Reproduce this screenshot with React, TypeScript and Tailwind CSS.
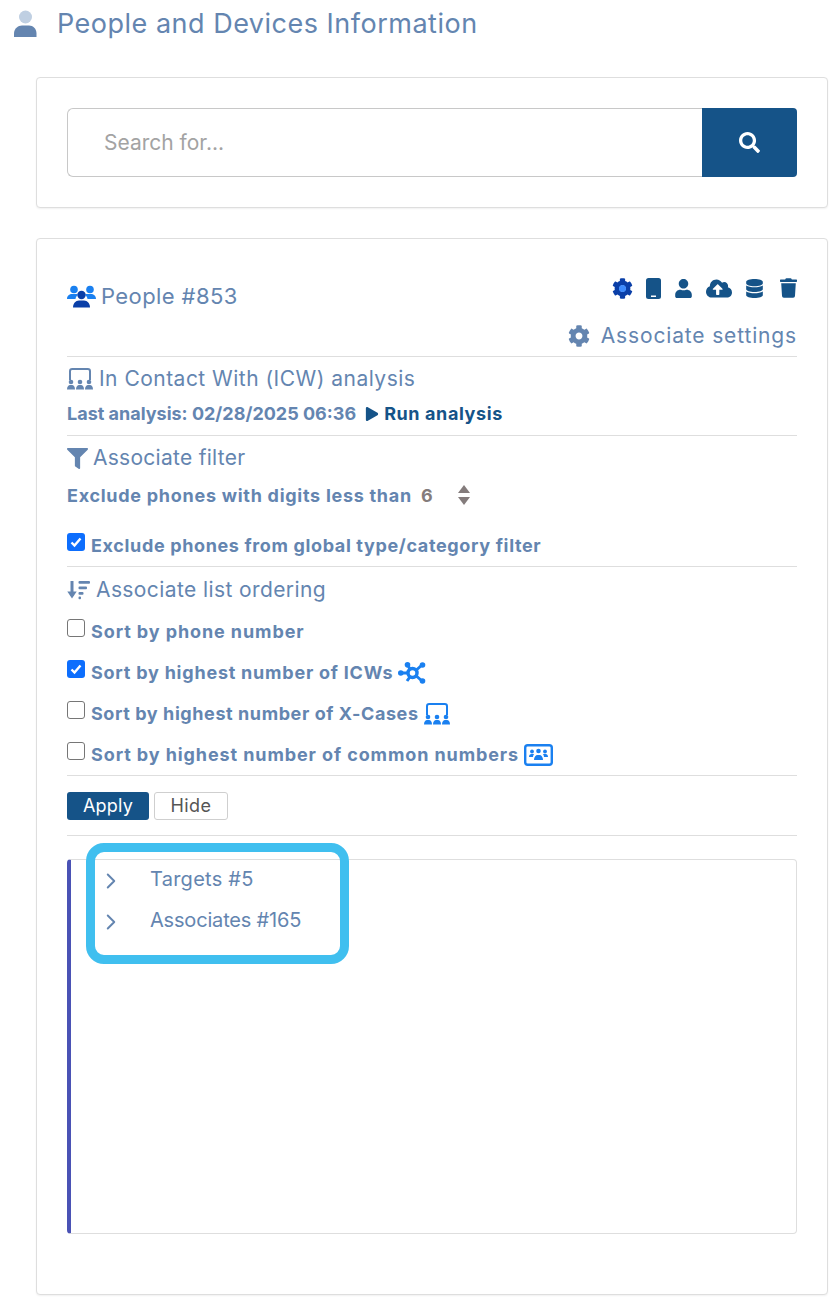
import { ChevronRight } from "lucide-react";
import type { ReactNode } from "react";
import {
  FaCloudUploadAlt,
  FaCog,
  FaDatabase,
  FaFilter,
  FaPlay,
  FaSearch,
  FaTrash,
  FaUser,
} from "react-icons/fa";

function PersonDuo() {
  return (
    <svg className="h-[28px] w-[24px]" viewBox="0 0 24 28">
      <circle cx="12.5" cy="7" r="6.5" fill="#bfcfe2" />
      <path d="M1 27v-3.5C1 18.5 5 15.5 9 15.5h7c4 0 7.5 3 7.500 8V27z" fill="#6485b0" />
    </svg>
  );
}

function PeopleDuo() {
  return (
    <svg className="h-[24px] w-[29px]" viewBox="0 0 29 24">
      <g fill="#1a80f0">
        <circle cx="7" cy="5.5" r="3.8" />
        <circle cx="23" cy="5.5" r="3.8" />
        <path d="M0 15c0-3.5 2.5-5 5-5h4c1 0 1.500.3 2 .7-1.500 1.200-2.300 2.700-2.500 4.300z" />
        <path d="M29 15c0-3.500-2.500-5-5-5h-4c-1 0-1.500.3-2 .7 1.500 1.200 2.300 2.700 2.500 4.300z" />
      </g>
      <g fill="#0a3fa8">
        <circle cx="14.5" cy="11" r="4.2" />
        <path d="M6 23.500c0-4 2.600-7 6-7h5c3.400 0 6 3 6 7z" />
      </g>
    </svg>
  );
}

function BoardPeople({ className, color }: { className: string; color: string }) {
  return (
    <svg className={className} viewBox="0 0 26 22" fill={color}>
      <path
        d="M3 12V3.200C3 2 4 1 5.200 1h15.600C22 1 23 2 23 3.200V12"
        fill="none"
        stroke={color}
        strokeWidth="2"
      />
      <circle cx="4" cy="14" r="2.300" />
      <circle cx="13" cy="14" r="2.300" />
      <circle cx="22" cy="14" r="2.300" />
      <path d="M0 21.500c0-3 1.500-4.500 3-4.500h2c1.700 0 3 1.500 3 4.500z" />
      <path d="M9 21.500c0-3 1.500-4.500 3-4.500h2c1.700 0 3 1.500 3 4.500z" />
      <path d="M18 21.500c0-3 1.500-4.500 3-4.500h2c1.700 0 3 1.500 3 4.500z" />
    </svg>
  );
}

function NetworkIcon() {
  return (
    <svg className="h-[22px] w-[28px]" viewBox="0 0 28 22" fill="#1a80f0">
      <path d="M3 11h9M9 2.500l6 8.500M24 3l-9 8M24 19l-9-8M9 19l5-7" stroke="#1a80f0" strokeWidth="3" fill="none" />
      <circle cx="2.800" cy="11" r="2.800" />
      <circle cx="9.500" cy="2.800" r="2.800" />
      <circle cx="24.500" cy="3" r="2.800" />
      <circle cx="24.500" cy="19" r="2.800" />
      <circle cx="14.500" cy="11" r="4.500" fill="#fff" stroke="#1a80f0" strokeWidth="3.500" />
    </svg>
  );
}

function BoxPeople() {
  return (
    <svg className="h-[22px] w-[29px]" viewBox="0 0 29 22" fill="#1a80f0">
      <rect x="1.200" y="1.200" width="26.600" height="19.600" rx="2.500" fill="none" stroke="#1a80f0" strokeWidth="2.400" />
      <circle cx="8" cy="7.500" r="1.900" />
      <circle cx="14.500" cy="7" r="2.300" />
      <circle cx="21" cy="7.500" r="1.900" />
      <path d="M5 13c0-2 1-3 2.500-3H9c.5 0 .8.100 1 .3-.6.800-1 1.700-1 2.700z" />
      <path d="M24 13c0-2-1-3-2.500-3H20c-.5 0-.8.100-1 .3.600.8 1 1.700 1 2.700z" />
      <path d="M10 16c0-3 1.600-5 3.500-5h2c1.900 0 3.500 2 3.500 5z" />
    </svg>
  );
}

function SortIcon() {
  return (
    <svg className="h-[20px] w-[24px]" viewBox="0 0 24 20" fill="#6485b0">
      <path d="M5 1v15" stroke="#6485b0" strokeWidth="3" fill="none" />
      <path d="M.3 11.500h9.400L5 18.500z" />
      <rect x="11.500" y="1" width="11.500" height="2.800" rx="1" />
      <rect x="11.500" y="6.500" width="8.500" height="2.800" rx="1" />
      <rect x="11.500" y="12" width="5" height="2.800" rx="1" />
      <rect x="11.500" y="16.500" width="2.500" height="2.800" rx="1" />
    </svg>
  );
}

function Check({ checked }: { checked?: boolean }) {
  return checked ? (
    <span className="-mt-2 flex size-[18px] shrink-0 items-center justify-center rounded-[3px] bg-[#0d6efd]">
      <svg className="size-[14px]" viewBox="0 0 14 14" fill="none">
        <path d="M2.500 7.500l3 3 6-7" stroke="#fff" strokeWidth="2.400" />
      </svg>
    </span>
  ) : (
    <span className="-mt-2 size-[18px] shrink-0 rounded-[3px] border border-[#767676] bg-white" />
  );
}

function SectionTitle({ icon, gap, children, tracking }: { icon: ReactNode; gap: string; children: ReactNode; tracking: string }) {
  return (
    <div className={`flex items-center text-[21px] leading-[30px] text-[#6485b0] ${gap} ${tracking}`}>
      {icon}
      <span>{children}</span>
    </div>
  );
}

function CheckRow({ checked, label, icon, tracking }: { checked?: boolean; label: string; icon?: ReactNode; tracking: string }) {
  return (
    <div className={`flex h-[41px] items-center gap-[6px] text-[18px] font-bold text-[#6485b0] ${tracking}`}>
      <Check checked={checked} />
      <span>{label}</span>
      {icon ? <span className="ml-[-1px] flex">{icon}</span> : null}
    </div>
  );
}

export default function App() {
  return (
    <div className="h-[1301px] w-[840px] overflow-hidden bg-white font-['Inter',sans-serif]">
      <header className="flex h-[77px] items-start pl-[13px] pt-[10px]">
        <PersonDuo />
        <h1 className="ml-[20px] text-[27px] leading-[28px] tracking-[0.5px] text-[#6485b0]">
          People and Devices Information
        </h1>
      </header>

      <section className="ml-[36px] mr-[12px] rounded-[4px] border border-[#dedede] bg-white p-[30px] shadow-[0_1px_2px_rgba(0,0,0,0.06)]">
        <div className="flex h-[69px]">
          <div className="flex flex-1 items-center rounded-l-[6px] border border-r-0 border-[#c8c8c8] pl-[36px] text-[21px] text-[#a3a3a3]">
            Search for...
          </div>
          <button className="flex w-[95px] items-center justify-center rounded-r-[4px] bg-[#155388] text-white" type="button">
            <FaSearch className="size-[21px]" />
          </button>
        </div>
      </section>

      <section className="relative ml-[36px] mr-[12px] mt-[30px] h-[1057px] rounded-[4px] border border-[#dedede] bg-white px-[30px] shadow-[0_1px_2px_rgba(0,0,0,0.06)]">
        <div className="flex h-[118px] justify-between border-b border-[#dedede]">
          <div className="mt-[39px] flex h-[36px] items-center gap-[5px] text-[22px] tracking-[0.4px] text-[#6485b0]">
            <PeopleDuo />
            <span>People #853</span>
          </div>
          <div className="flex flex-col items-end">
            <div className="mt-[38px] flex h-[22px] items-center text-[#155388]">
              <span className="relative flex">
                <FaCog className="size-[21px] text-[#0a3fa8]" />
                <span className="absolute left-[7px] top-[7px] size-[7px] rounded-full bg-[#3d8bfd]" />
              </span>
              <svg className="ml-[13px] h-[21px] w-[15px]" viewBox="0 0 15 21">
                <rect width="15" height="21" rx="2.500" fill="#155388" />
                <rect x="5" y="17.500" width="5" height="1.500" fill="#fff" />
              </svg>
              <FaUser className="ml-[13px] size-[19px]" />
              <FaCloudUploadAlt className="ml-[13px] h-[21px] w-[26px]" />
              <FaDatabase className="ml-[13px] size-[19px]" />
              <FaTrash className="ml-[16px] h-[20px] w-[17px]" />
            </div>
            <div className="mt-[22px] flex h-[30px] items-center gap-[11px] text-[21px] tracking-[0.85px] text-[#6485b0]">
              <FaCog className="size-[22px]" />
              <span>Associate settings</span>
            </div>
          </div>
        </div>

        <div className="h-[79px] border-b border-[#dedede] pt-[7px]">
          <SectionTitle
            gap="gap-[6px]"
            icon={<BoardPeople className="h-[22px] w-[26px]" color="#6485b0" />}
            tracking="tracking-[0.48px]"
          >
            In Contact With (ICW) analysis
          </SectionTitle>
          <div className="mt-[8px] flex items-center text-[18px] font-bold leading-[24px] text-[#6485b0]">
            <span>Last analysis: 02/28/2025 06:36</span>
            <FaPlay className="ml-[9px] size-[14px] text-[#155388]" />
            <span className="ml-[5px] tracking-[0.6px] text-[#155388]">Run analysis</span>
          </div>
        </div>

        <div className="h-[131px] border-b border-[#dedede] pt-[7px]">
          <SectionTitle
            gap="gap-[5px]"
            icon={<FaFilter className="size-[21px]" />}
            tracking="tracking-[0.27px]"
          >
            Associate filter
          </SectionTitle>
          <div className="mt-[7px] flex h-[30px] items-center text-[18px] font-bold tracking-[0.72px] text-[#6485b0]">
            <span>Exclude phones with digits less than</span>
            <span className="ml-[9px] text-[#847c7c]">6</span>
            <svg className="ml-[24px] h-[22px] w-[14px]" viewBox="0 0 14 22" fill="#847c7c">
              <path d="M7 1l6 8H1z" />
              <path d="M7 21l6-8H1z" />
            </svg>
          </div>
          <div className="mt-[22px] flex items-center gap-[6px] text-[18px] font-bold tracking-[0.64px] text-[#6485b0]">
            <Check checked />
            <span>Exclude phones from global type/category filter</span>
          </div>
        </div>

        <div className="h-[209px] border-b border-[#dedede] pt-[8px]">
          <SectionTitle gap="gap-[5px]" icon={<SortIcon />} tracking="tracking-[0.4px]">
            Associate list ordering
          </SectionTitle>
          <div className="mt-[6px]">
            <CheckRow label="Sort by phone number" tracking="tracking-[0.9px]" />
            <CheckRow checked icon={<NetworkIcon />} label="Sort by highest number of ICWs" tracking="tracking-[0.77px]" />
            <CheckRow
              icon={<BoardPeople className="h-[22px] w-[26px]" color="#1a80f0" />}
              label="Sort by highest number of X-Cases"
              tracking="tracking-[0.58px]"
            />
            <CheckRow icon={<BoxPeople />} label="Sort by highest number of common numbers" tracking="tracking-[0.9px]" />
          </div>
        </div>

        <div className="flex h-[60px] items-start gap-[5px] border-b border-[#dedede] pt-[16px]">
          <button className="h-[28px] w-[82px] rounded-[3px] bg-[#155388] text-[18px] leading-[28px] tracking-[0.2px] text-white" type="button">
            Apply
          </button>
          <button className="h-[28px] w-[74px] rounded-[3px] border border-[#cfcfcf] bg-white text-[18px] leading-[26px] tracking-[0.4px] text-[#555]" type="button">
            Hide
          </button>
        </div>

        <div className="mt-[23px] h-[375px] rounded-[4px] border border-l-[4px] border-[#dedede] border-l-[#4a52b5]">
          {[
            ["Targets #5", "tracking-[0.25px]"],
            ["Associates #165", "tracking-[-0.18px]"],
          ].map(([label, tracking]) => (
            <div className={`flex h-[41px] items-center pb-[3px] pl-[27px] text-[20px] text-[#6485b0] ${tracking}`} key={label}>
              <ChevronRight className="mt-[3px] size-[26px]" strokeWidth={1.8} />
              <span className="ml-[26px]">{label}</span>
            </div>
          ))}
        </div>

        <div className="absolute left-[49px] top-[604px] h-[121px] w-[263px] rounded-[18px] border-[9px] border-[#40bfef]" />
      </section>
    </div>
  );
}
